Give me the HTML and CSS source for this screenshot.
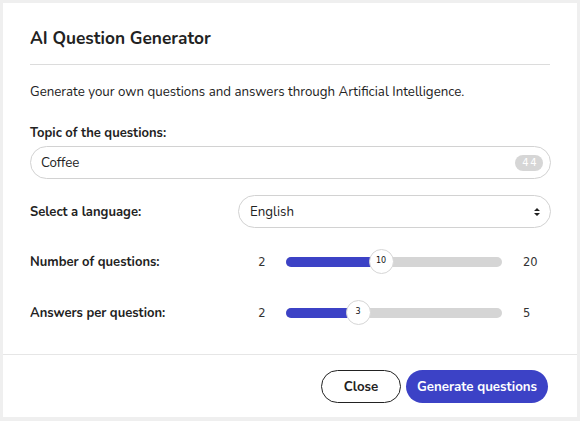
FILE: index.html
```html
<!DOCTYPE html>
<html lang="en">
<head>
<meta charset="utf-8">
<title>AI Question Generator</title>
<link rel="stylesheet" href="styles.css">
</head>
<body>
<div class="modal">
  <div class="header">
    <h2 class="title">AI Question Generator</h2>
  </div>
  <div class="content">
    <p class="desc">Generate your own questions and answers through Artificial Intelligence.</p>
    <div class="field-label">Topic of the questions:</div>
    <div class="text-input">
      <span class="input-value">Coffee</span>
      <span class="counter">44</span>
    </div>
    <div class="row select-row">
      <div class="row-label">Select a language:</div>
      <div class="select">
        <span class="select-value">English</span>
        <svg class="select-arrows" width="8" height="10" viewBox="0 0 8 10"><path d="M4 1 L7 4 L1 4 Z M4 9 L7 6 L1 6 Z" fill="#222"/></svg>
      </div>
    </div>
    <div class="row slider-row first-slider">
      <div class="row-label">Number of questions:</div>
      <div class="range-min">2</div>
      <div class="track">
        <div class="fill" style="width:95px"></div>
        <div class="thumb" style="left:95px">10</div>
      </div>
      <div class="range-max">20</div>
    </div>
    <div class="row slider-row">
      <div class="row-label">Answers per question:</div>
      <div class="range-min">2</div>
      <div class="track">
        <div class="fill" style="width:72px"></div>
        <div class="thumb" style="left:72px">3</div>
      </div>
      <div class="range-max">5</div>
    </div>
  </div>
  <div class="footer">
    <button class="btn btn-close">Close</button>
    <button class="btn btn-primary">Generate questions</button>
  </div>
</div>
</body>
</html>
```

FILE: styles.css
```css
html, body {
  margin: 0;
  padding: 0;
  background: #efefef;
}
body {
  font-family: "Nunito", "Lato", "Noto Sans", sans-serif;
  color: #222;
  font-size: 13.3px;
}
.modal {
  margin: 3px;
  width: 574px;
  height: 414px;
  background: #fff;
  display: flex;
  flex-direction: column;
  box-sizing: border-box;
}
.header {
  margin: 0 27px 0 27px;
  padding: 24px 0 13px;
  border-bottom: 1px solid #dcdcdc;
}
.title {
  margin: 0;
  font-size: 17.3px;
  font-weight: 700;
  line-height: 24px;
  color: #222;
}
.content {
  flex: 1;
  padding: 0 26px 0 27px;
}
.desc {
  margin: 17px 0 0;
  line-height: 20px;
  font-size: 13.3px;
}
.field-label {
  margin-top: 21px;
  line-height: 20px;
  font-weight: 700;
  font-size: 13px;
}
.text-input {
  margin-top: 3px;
  height: 33px;
  box-sizing: border-box;
  border: 1px solid #d2d2d2;
  border-radius: 17px;
  display: flex;
  align-items: center;
  padding: 0 7px 0 10px;
}
.input-value {
  flex: 1;
}
.counter {
  background: #d6d6d6;
  color: #fff;
  font-family: "DejaVu Sans", sans-serif;
  font-size: 10px;
  letter-spacing: 1.5px;
  line-height: 16px;
  height: 16px;
  padding: 0 5px 0 7px;
  border-radius: 8px;
}
.row {
  display: grid;
  align-items: center;
}
.row-label {
  font-weight: 700;
  font-size: 13px;
}
.select-row {
  margin-top: 16px;
  grid-template-columns: 208px 1fr;
}
.select {
  height: 33px;
  box-sizing: border-box;
  border: 1px solid #d2d2d2;
  border-radius: 17px;
  display: flex;
  align-items: center;
  padding: 0 9px 0 11px;
}
.select-value {
  flex: 1;
}
.slider-row {
  margin-top: 17px;
  height: 33px;
  grid-template-columns: 208px 48px 216px auto;
}
.slider-row + .slider-row {
  margin-top: 18px;
}
.range-min, .range-max {
  font-family: "DejaVu Sans", sans-serif;
  font-size: 11.5px;
  color: #333;
}
.range-min {
  text-align: center;
}
.range-max {
  padding-left: 21px;
}
.track {
  position: relative;
  height: 10px;
  border-radius: 5px;
  background: #d5d5d5;
}
.fill {
  height: 10px;
  border-radius: 5px 0 0 5px;
  background: #3c42c6;
}
.thumb {
  position: absolute;
  top: 50%;
  width: 25px;
  height: 25px;
  margin-left: -12.5px;
  margin-top: -12.5px;
  box-sizing: border-box;
  border: 1px solid #d6d6d6;
  border-radius: 50%;
  background: #fff;
  font-family: "DejaVu Sans", sans-serif;
  font-size: 8px;
  display: flex;
  align-items: center;
  justify-content: center;
  padding-bottom: 3px;
  color: #111;
}
.footer {
  border-top: 1px solid #e6e6e6;
  height: 63px;
  box-sizing: border-box;
  display: flex;
  justify-content: flex-end;
  align-items: flex-start;
  padding: 15px 29px 0 0;
  gap: 5px;
}
.btn {
  height: 33px;
  border-radius: 17px;
  font-family: inherit;
  font-size: 13.3px;
  font-weight: 700;
  box-sizing: border-box;
  cursor: pointer;
}
.btn-close {
  width: 80px;
  background: #fff;
  border: 1px solid #222;
  color: #222;
}
.btn-primary {
  width: 142px;
  background: #3c42c6;
  border: none;
  color: #fff;
}
```
